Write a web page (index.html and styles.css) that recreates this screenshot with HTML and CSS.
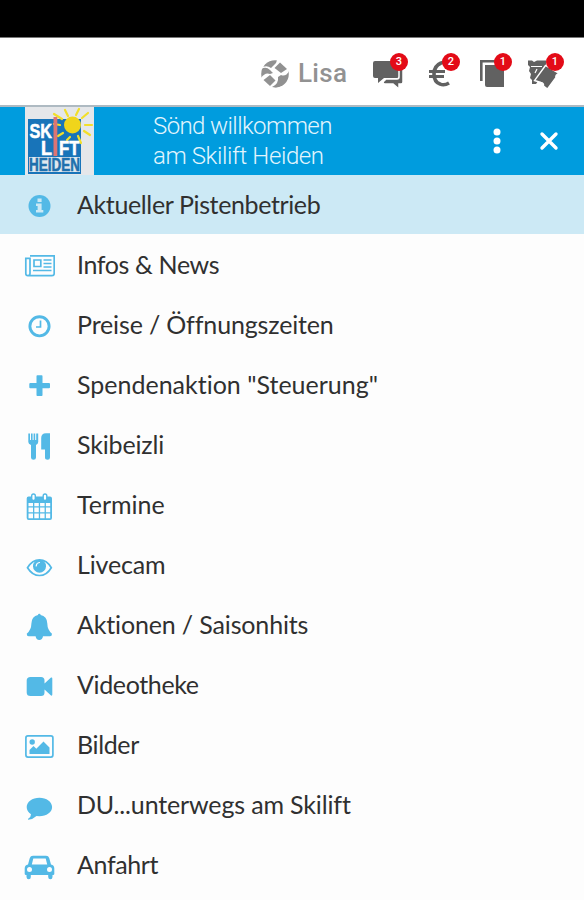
FILE: index.html
```html
<!DOCTYPE html>
<html lang="de">
<head>
    <meta charset="UTF-8">
    <meta name="viewport" content="width=device-width, initial-scale=1.0">
    <title>Skilift Heiden</title>
    <link rel="stylesheet" href="styles.css">
</head>
<body>
    <div class="statusbar"></div>
    <header class="topbar">
        <svg class="brand-icon" viewBox="0 0 28 28">
            <defs><clipPath id="disc"><circle cx="14" cy="14" r="13.8"/></clipPath></defs>
            <g clip-path="url(#disc)" fill="#919191">
                <path d="M2 7L6 0H16L15 3L10 8Q6 5 2 7Z"/>
                <path d="M19 2.5L26 9L20 13L13.5 8Z"/>
                <path d="M0 9Q5 6 9 10L12 13L9 14Q4 12 0 18Z"/>
                <path d="M9 15L14.5 20.5L9 26L2.5 20Z"/>
                <path d="M28 11V24L15 28L11 27Q18 24 17 17L20 15Q25 17 28 11Z"/>
            </g>
        </svg>
        <span class="brand">Lisa</span>
        <nav class="tools">
            <a class="tool chat">
                <svg viewBox="0 0 32 32"><path fill="#616161" d="M3 5H25Q27 5 27 7V20Q27 22 25 22H12L6 27V22H3Q1 22 1 20V7Q1 5 3 5Z"/><path fill="#616161" stroke="#fff" stroke-width="1.5" d="M27 9H29Q31 9 31 11V26Q31 28 29 28H27V33L21 28H13Q11 28 11 26L14 23H25Q27 23 27 21Z"/></svg>
                <span class="badge">3</span>
            </a>
            <a class="tool euro">
                <svg viewBox="0 0 32 32"><g fill="none" stroke="#616161" stroke-width="3.6"><path d="M20 8Q16 5 12 7Q5 10 5 18Q5 26 11 28Q15 30 20 27"/><path stroke-width="2.8" d="M0 15.5H16M0 20.5H15"/></g></svg>
                <span class="badge">2</span>
            </a>
            <a class="tool pages">
                <svg viewBox="0 0 32 32"><path fill="none" stroke="#616161" stroke-width="2.6" d="M17 5.3H2.3V25"/><path fill="#616161" d="M6 9H25V31H8Q6 31 6 29Z"/></svg>
                <span class="badge">1</span>
            </a>
            <a class="tool tickets">
                <svg viewBox="0 0 32 32"><path fill="#616161" d="M0 4.5H4L6 6L9 4.5H18V14L8 28H4V24L2 22L3 18L1 15L2 11L0 9Z"/><path stroke="#fff" stroke-width="1.2" d="M3 10.5H14M9 13L7 17"/><path fill="#616161" stroke="#fff" stroke-width="1.4" d="M17.5 9.5L31 17.5Q27 19 28 21.5L19.5 33L15.5 30Q16 27 13 26.5L6.5 24.5Z"/></svg>
                <span class="badge">1</span>
            </a>
        </nav>
    </header>

    <div class="banner">
        <svg class="logo" viewBox="0 0 69 68">
            <rect width="69" height="68" fill="#e5e7ea"/>
            <path fill="#1874b9" d="M3 12H56V67H3Z"/>
            <path fill="#dfe8ef" d="M4 50H55V65H4Z"/>
            <g stroke="#f2df2a" stroke-width="2.2" stroke-linecap="round">
                <path d="M43 9L40 3M51 8L54 2M57 11L63 6M60 18H67M59 24L65 28M53 29L56 36M45 30L42 33M38 26L33 29M35 18L29 17M37 12L29 7"/>
            </g>
            <rect x="28.5" y="10" width="3.8" height="39" fill="#dc7474"/>
            <circle cx="47.5" cy="18" r="8.5" fill="#f0d51b"/>
            <g class="logo-text">
                <text x="4.5" y="31" textLength="22.5" lengthAdjust="spacingAndGlyphs">SK</text>
                <text x="16" y="48" textLength="11" lengthAdjust="spacingAndGlyphs">L</text>
                <text x="34" y="48" textLength="20.5" lengthAdjust="spacingAndGlyphs">FT</text>
                <text class="logo-name" x="4" y="64" textLength="51" lengthAdjust="spacingAndGlyphs">HEIDEN</text>
            </g>
        </svg>
        <h1>Sönd willkommen<br><span class="line-two">am Skilift Heiden</span></h1>
        <svg class="more" viewBox="0 0 10 28" fill="#fff"><circle cx="5" cy="5" r="3.5"/><circle cx="5" cy="14" r="3.5"/><circle cx="5" cy="23" r="3.5"/></svg>
        <svg class="close" viewBox="0 0 20 20"><path d="M3 3L17 17M17 3L3 17" stroke="#fff" stroke-width="3.4" stroke-linecap="round"/></svg>
    </div>

    <ul class="menu">
        <li class="active">
            <svg viewBox="0 0 32 32"><circle cx="16.5" cy="16" r="11"/><path fill="#cce9f5" d="M14.5 8.5H18.6V12H14.5ZM13 13.5H18.6V20H20.3V22.5H13V20H14.6V16H13Z"/></svg>
            <span class="tight">Aktueller Pistenbetrieb</span>
        </li>
        <li>
            <svg viewBox="0 0 32 32"><g class="line"><path d="M7 5.8H31.2V23.5Q31.2 25.6 29 25.6H4.8Q2.8 25.6 2.8 23.5V8.3H7V23.5Q7 25.6 4.8 25.6"/><path d="M11 10H17.8V16.5H11ZM20.5 10H28.5M20.5 13.5H28.5M20.5 17H28.5M10 20.5H28.5"/></g></svg>
            <span class="tight">Infos &amp; News</span>
        </li>
        <li>
            <svg viewBox="0 0 32 32"><circle class="line thick" cx="16.5" cy="16.3" r="9.6"/><path class="line" d="M17.5 10.5V17H13"/></svg>
            <span class="snug">Preise / Öffnungszeiten</span>
        </li>
        <li>
            <svg viewBox="0 0 32 32"><path d="M14.3 5.3H18.7Q19.5 5.3 19.5 6.3V13H26Q27 13 27 14V17.3Q27 18.3 26 18.3H19.5V25Q19.5 26 18.7 26H14.3Q13.5 26 13.5 25V18.3H7.3Q6.3 18.3 6.3 17.3V14Q6.3 13 7.3 13H13.5V6.3Q13.5 5.3 14.3 5.3Z"/></svg>
            <span>Spendenaktion "Steuerung"</span>
        </li>
        <li>
            <svg viewBox="0 0 32 32"><path d="M5.3 3.5H7V10H8V3.5H9.6V10H10.6V3.5H12.2V10H13.2V3.5H15.2V12Q15.2 14 13 15V27.5Q13 29.7 10.5 29.7Q8 29.7 8 27.5V15Q5.3 14 5.3 12ZM23 3.3H27V27.5Q27 29.7 24.7 29.7Q22 29.7 22 27.5V19.5H18.2V8Q18.2 3.3 23 3.3Z"/></svg>
            <span class="snug">Skibeizli</span>
        </li>
        <li>
            <svg viewBox="0 0 32 32"><path fill-rule="evenodd" d="M5.5 6.5H27Q29 6.5 29 8.5V28Q29 30 27 30H5.7Q3.7 30 3.7 28V8.5Q3.7 6.5 5.5 6.5ZM5.5 13V16.3H10V13ZM11.3 13V16.3H15.8V13ZM17.1 13V16.3H21.6V13ZM22.9 13V16.3H27.2V13ZM5.5 17.6V22.2H10V17.6ZM11.3 17.6V22.2H15.8V17.6ZM17.1 17.6V22.2H21.6V17.6ZM22.9 17.6V22.2H27.2V17.6ZM5.5 23.5V28.2H10V23.5ZM11.3 23.5V28.2H15.8V23.5ZM17.1 23.5V28.2H21.6V23.5ZM22.9 23.5V28.2H27.2V23.5Z"/><g fill="#fff" stroke="#53b9e6" stroke-width="1.4"><rect x="8.7" y="4" width="3.6" height="6.5" rx="1.8"/><rect x="20.2" y="4" width="3.6" height="6.5" rx="1.8"/></g></svg>
            <span>Termine</span>
        </li>
        <li>
            <svg viewBox="0 0 32 32"><path class="line" d="M4.5 17.7Q9.3 9.9 16.5 9.9T28.3 17.7Q23.7 25.5 16.5 25.5T4.5 17.7Z"/><circle cx="16.5" cy="16.2" r="6.5"/><path d="M13.2 16Q13.4 12.8 16.5 12.5" fill="none" stroke="#fff" stroke-width="1.2" stroke-linecap="round"/></svg>
            <span class="snug">Livecam</span>
        </li>
        <li>
            <svg viewBox="0 0 32 32"><path d="M15 5Q15 3.7 16.3 3.7T17.6 5Q24 6 24.3 13.5Q24.4 20 29 23.7Q29 26.3 27 26.3H20Q19.5 30 16.3 30T12.6 26.3H5.7Q3.7 26.3 3.7 23.7Q8.3 20 8.4 13.5Q8.7 6 15 5Z"/></svg>
            <span class="snug">Aktionen / Saisonhits</span>
        </li>
        <li>
            <svg viewBox="0 0 32 32"><path d="M7.5 7H18Q21.5 7 21.5 10.5V13.5L28 7.5Q29.3 7 29.3 8.5V24.5Q29.3 26 28 25.5L21.5 19.5V22.5Q21.5 26 18 26H7.5Q3.7 26 3.7 22.5V10.5Q3.7 7 7.5 7Z"/></svg>
            <span class="tight">Videotheke</span>
        </li>
        <li>
            <svg viewBox="0 0 32 32"><rect class="line" x="2.9" y="5.9" width="27" height="21.2" rx="2"/><circle cx="9.2" cy="12" r="2.7"/><path d="M6.5 24V20L10.5 16L13.3 18.7L20.5 11.5L26.5 17.5V24Z"/></svg>
            <span class="tight">Bilder</span>
        </li>
        <li>
            <svg viewBox="0 0 32 32"><path d="M16.4 7.7C23.5 7.7 29.1 11.8 29.1 17S23.5 26.3 16.4 26.3L13.5 26.1Q10 29.5 5.2 29.8Q4.6 29.3 5.4 28.6Q8 26.8 8 24.2Q3.7 21.5 3.7 17C3.7 11.8 9.3 7.7 16.4 7.7Z"/></svg>
            <span class="snug">DU...unterwegs am Skilift</span>
        </li>
        <li>
            <svg viewBox="0 0 32 32"><path fill-rule="evenodd" d="M10 5.7H23Q25.5 5.7 26.2 8L28 14.5Q31.3 15 31.3 18.5V24Q31.3 25 30 25H29.5V27Q29.5 29.3 27.4 29.3T25.2 27V25H7.8V27Q7.8 29.3 5.7 29.3T3.5 27V25H3Q1.7 25 1.7 24V18.5Q1.7 15 5 14.5L6.8 8Q7.5 5.7 10 5.7ZM10.3 8.5L8.8 14.5H24.2L22.7 8.5ZM6.5 17A2.5 2.5 0 1 0 6.5 22A2.5 2.5 0 1 0 6.5 17ZM26.5 17A2.5 2.5 0 1 0 26.5 22A2.5 2.5 0 1 0 26.5 17Z"/></svg>
            <span class="tight">Anfahrt</span>
        </li>
    </ul>
</body>
</html>
```

FILE: styles.css
```css
* {
    box-sizing: border-box;
}
body {
    margin: 0;
    height: 900px;
    overflow: hidden;
    background: #fdfdfd;
    color: #303030;
    font-family: Lato, "Liberation Sans", sans-serif;
}
.statusbar {
    height: 38px;
    background: #000;
    border-bottom: 1px solid #777;
}
.topbar {
    display: flex;
    align-items: center;
    height: 69px;
    padding-left: 261px;
    background: #fff;
    border-bottom: 2px solid #aebac2;
}
.brand-icon {
    width: 28px;
    height: 28px;
    margin-top: 4px;
}
.brand {
    width: 74px;
    padding-left: 9px;
    color: #929292;
    font: 500 26px/30px Roboto, sans-serif;
    letter-spacing: 0.3px;
    margin-top: 3px;
}
.tools {
    display: flex;
    margin-left: 9px;
}
.tool {
    position: relative;
    width: 32px;
    height: 32px;
}
.tool svg {
    display: block;
    width: 32px;
    height: 32px;
    overflow: visible;
}
.euro {
    margin-left: 25px;
}
.pages {
    margin-left: 18px;
}
.tickets {
    margin-left: 17px;
}
.badge {
    position: absolute;
    top: -3px;
    left: 18px;
    width: 18px;
    height: 18px;
    border-radius: 50%;
    background: #e30b17;
    color: #fff;
    font: 500 11px/18px Roboto, sans-serif;
    text-align: center;
}
.euro .badge {
    left: 13px;
}
.pages .badge {
    left: 15px;
}
.banner {
    display: flex;
    align-items: center;
    height: 68px;
    padding-left: 25px;
    background: #009cde;
    color: #e2f5fd;
}
.logo {
    width: 69px;
    height: 68px;
}
.logo-text {
    fill: #fff;
    stroke: #fff;
    stroke-width: 0.6;
    font: bold 21px "Liberation Sans", sans-serif;
}
.logo-name {
    fill: #1f70ad;
    stroke: #1f70ad;
    font-size: 18px;
}
.banner h1 {
    width: 337px;
    margin: 0;
    padding-left: 59px;
    font: 300 24px/30px Roboto, sans-serif;
    letter-spacing: -0.6px;
    white-space: nowrap;
}
.line-two {
    letter-spacing: -0.4px;
}
.more {
    width: 10px;
    height: 28px;
    margin-left: 61px;
}
.close {
    width: 20px;
    height: 20px;
    margin-left: 37px;
}
.menu {
    margin: 0;
    padding: 0;
    list-style: none;
}
.menu li {
    display: flex;
    height: 60px;
    padding-left: 23px;
    border-bottom: 1px solid #fdfdfd;
}
.menu .active {
    background: #cce9f5;
}
.menu svg {
    width: 32px;
    height: 32px;
    margin: 15px 22px 0 0;
    fill: #53b9e6;
}
.menu .line {
    fill: none;
    stroke: #53b9e6;
    stroke-width: 1.7;
}
.menu .thick {
    stroke-width: 2.9;
}
.menu span {
    font-size: 25px;
    line-height: 58px;
    font-variant-ligatures: none;
    white-space: nowrap;
}
.menu .tight {
    letter-spacing: -0.37px;
}
.menu .snug {
    letter-spacing: -0.15px;
}
```
